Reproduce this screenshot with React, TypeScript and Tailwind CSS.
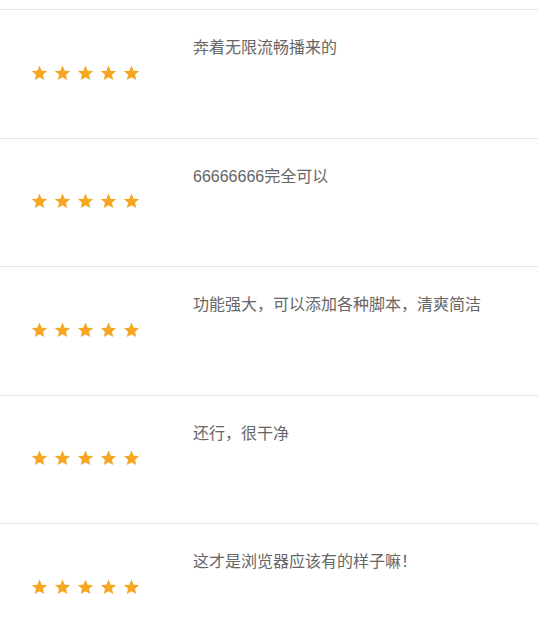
import React from 'react';

const reviews = [
    '奔着无限流畅播来的',
    '66666666完全可以',
    '功能强大，可以添加各种脚本，清爽简洁',
    '还行，很干净',
    '这才是浏览器应该有的样子嘛！',
];

const Star: React.FC = () => (
    <svg width="17" height="16" viewBox="0 0 24 23" className="shrink-0">
        <path
            d="M12 0.8l3.1 7.3 7.9 0.7-6 5.2 1.8 7.7L12 17.6l-6.8 4.1 1.8-7.7-6-5.2 7.9-0.7z"
            fill="#f5a623"
        />
    </svg>
);

const ReviewRow: React.FC<{ text: string }> = ({ text }) => (
    <div className="flex h-[128.5px] border-b border-[#e6e6e6]">
        <div className="flex w-[193px] shrink-0 items-center gap-[6px] pl-[31px] pb-[2px]">
            {[0, 1, 2, 3, 4].map((i) => (
                <Star key={i} />
            ))}
        </div>
        <div className="pt-[26px] text-[16px] leading-6 text-[#666]">{text}</div>
    </div>
);

export default function App() {
    return (
        <div
            className="min-h-screen bg-white pt-[9px]"
            style={{ fontFamily: '"Liberation Sans", "Noto Sans CJK SC", sans-serif' }}
        >
            <div className="border-t border-[#e6e6e6]">
                {reviews.map((r) => (
                    <ReviewRow key={r} text={r} />
                ))}
            </div>
        </div>
    );
}
